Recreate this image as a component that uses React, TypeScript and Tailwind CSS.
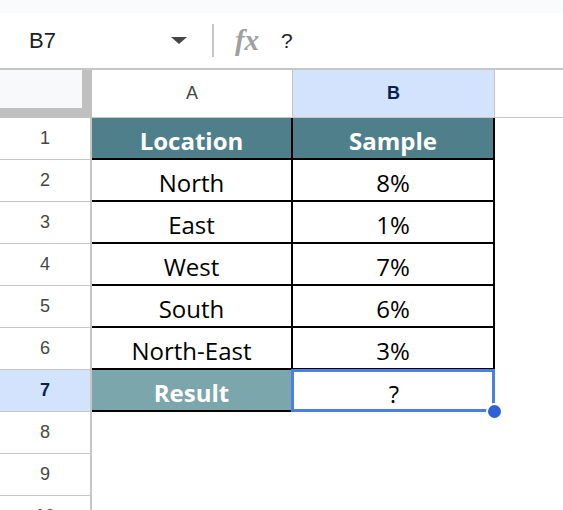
import React from 'react';

const rows = [
  { a: 'Location', b: 'Sample', head: true },
  { a: 'North', b: '8%' },
  { a: 'East', b: '1%' },
  { a: 'West', b: '7%' },
  { a: 'South', b: '6%' },
  { a: 'North-East', b: '3%' },
];

const cellFont = { fontFamily: '"Open Sans", sans-serif' };
const uiFont = { fontFamily: '"Liberation Sans", Arial, sans-serif' };

const RowHeader = ({ n, active }: { n: number; active?: boolean }) => (
  <div
    className={`flex h-[42px] w-[92px] shrink-0 items-center justify-center border-r-2 border-b border-[#c4c7c5] text-[18px] ${
      active ? 'bg-[#d3e3fd] font-bold text-[#0b1f4d]' : 'bg-white text-[#444746]'
    }`}
    style={uiFont}
  >
    {n}
  </div>
);

export default function App() {
  return (
    <div className="h-[510px] w-[563px] overflow-hidden bg-white">
      <div className="h-[13px] bg-[#f9fbfd]" />

      {/* formula bar */}
      <div className="flex h-[57px] items-center border-b-2 border-[#c4c7c5] bg-white" style={uiFont}>
        <div className="w-[29px]" />
        <span className="text-[22px] text-[#1f1f1f]">B7</span>
        <div className="ml-[115px] h-0 w-0 border-x-[8px] border-t-[7px] border-x-transparent border-t-[#444746]" />
        <div className="ml-[25px] h-[33px] w-[2px] bg-[#c7c7c7]" />
        <span
          className="ml-[21px] text-[29px] font-bold italic leading-none text-[#a0a0a0]"
          style={{ fontFamily: '"Liberation Serif", serif' }}
        >
          fx
        </span>
        <span className="ml-[22px] text-[21px] text-[#1f1f1f]">?</span>
      </div>

      {/* column headers */}
      <div className="flex h-[48px]" style={uiFont}>
        <div className="h-[48px] w-[92px] shrink-0 border-r-[10px] border-b-[10px] border-[#c0c0c0] bg-[#f8f9fa]" />
        <div className="flex w-[201px] shrink-0 items-center justify-center border-r border-b border-[#c4c7c5] text-[18px] text-[#444746]">
          A
        </div>
        <div className="flex w-[202px] shrink-0 items-center justify-center border-r border-b border-[#c4c7c5] bg-[#d3e3fd] text-[18px] font-bold text-[#0b1f4d]">
          B
        </div>
        <div className="flex-1 border-b border-[#c4c7c5]" />
      </div>

      {/* body */}
      {rows.map((r, i) => (
        <div key={i} className="flex">
          <RowHeader n={i + 1} />
          <div
            className={`flex h-[42px] w-[201px] shrink-0 items-center justify-center border-r-2 border-b-2 border-black pt-[6px] text-[24px] ${
              r.head ? 'bg-[#4f7f8a] font-bold text-white' : 'text-black'
            }`}
            style={cellFont}
          >
            {r.a}
          </div>
          <div
            className={`flex h-[42px] w-[202px] shrink-0 items-center justify-center border-r-2 border-b-2 border-black pt-[6px] text-[24px] ${
              r.head ? 'bg-[#4f7f8a] font-bold text-white' : 'text-black'
            }`}
            style={cellFont}
          >
            {r.b}
          </div>
        </div>
      ))}

      <div className="flex">
        <RowHeader n={7} active />
        <div
          className="flex h-[42px] w-[201px] shrink-0 items-center justify-center border-r-2 border-b-2 border-black bg-[#7ba6ac] pt-[6px] text-[24px] font-bold text-white"
          style={cellFont}
        >
          Result
        </div>
        <div
          className="relative flex h-[42px] w-[202px] shrink-0 items-center justify-center pt-[6px] text-[24px] text-black"
          style={cellFont}
        >
          ?
          <div className="absolute -top-px -left-[2px] right-0 bottom-0 border-[3px] border-[#4a80e4]" />
          <div className="absolute -right-[8px] -bottom-[8px] h-[17px] w-[17px] rounded-full border-2 border-white bg-[#2d62d6]" />
        </div>
      </div>

      {[8, 9, 10].map((n) => (
        <div key={n} className="flex">
          <RowHeader n={n} />
        </div>
      ))}
    </div>
  );
}
